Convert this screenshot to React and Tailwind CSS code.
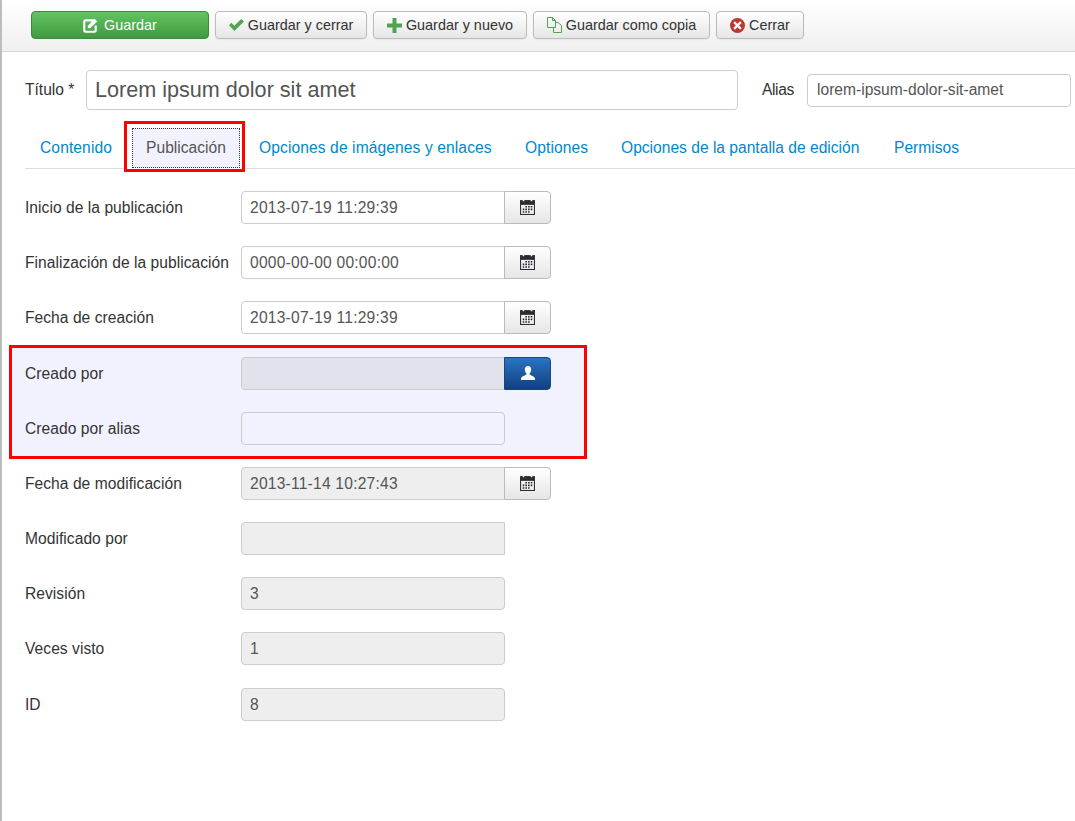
const btn =
  'h-[28px] flex items-center justify-center gap-[4px] rounded-[4px] border border-[#bbb] bg-gradient-to-b from-white to-[#e6e6e6] text-[14.4px] text-[#333] shadow-[0_1px_2px_rgba(0,0,0,0.05)]';

function EditIcon() {
  return (
    <svg width="15" height="15" viewBox="0 0 14 14" fill="none">
      <path d="M10 2.200H2.200a1 1 0 0 0-1 1v8.600a1 1 0 0 0 1 1h8.600a1 1 0 0 0 1-1V7" stroke="#fff" strokeWidth="2" />
      <path d="M4.500 9.500V7.300L10.800.8l2.400 2.400-6.500 6.300z" fill="#fff" />
    </svg>
  );
}

function CheckIcon() {
  return (
    <svg width="15" height="12" viewBox="0 0 15 12">
      <path d="M0 6.200 2.300 3.800l3.100 3L12.200 0 15 2.500 5.400 12z" fill="#51a351" />
    </svg>
  );
}

function PlusIcon() {
  return (
    <svg width="15" height="15" viewBox="0 0 15 15">
      <path d="M5.500 0h4v5.500H15v4H9.500V15h-4V9.500H0v-4h5.500z" fill="#51a351" />
    </svg>
  );
}

function CopyIcon() {
  return (
    <svg width="15" height="16" viewBox="0 0 15 16" fill="none" stroke="#51a351">
      <path d="M.5.5h5l3 3v7h-8z" />
      <path d="M5.500.5v3h3" />
      <path d="M8.500 5.500h2.500l3.500 3v7h-8v-5" />
    </svg>
  );
}

function CloseIcon() {
  return (
    <svg width="15" height="15" viewBox="0 0 15 15">
      <circle cx="7.500" cy="7.500" r="7.500" fill="#bd362f" />
      <path d="M5 5l5 5M10 5l-5 5" stroke="#fff" strokeWidth="2.400" strokeLinecap="square" />
    </svg>
  );
}

function CalendarIcon() {
  return (
    <svg width="15" height="16" viewBox="0 0 14 15" className="mb-[2px]">
      <path d="M0 1h14v14H0z" fill="#2b2b33" />
      <path d="M1 5.500h12V14H1z" fill="#f2f2f2" />
      <path
        d="M5 6.500h1.500V8H5zM7.500 6.500H9V8H7.500zM10 6.500h1.500V8H10zM2.500 9H4v1.500H2.500zM5 9h1.500v1.500H5zM7.500 9H9v1.500H7.500zM10 9h1.500v1.500H10zM2.500 11.500H4V13H2.500zM5 11.500h1.500V13H5zM7.500 11.500H9V13H7.500z"
        fill="#2b2b33"
      />
      <path d="M2.500 0h1.500v2H2.500zM10 0h1.500v2H10z" fill="#f2f2f2" />
    </svg>
  );
}

function UserIcon() {
  return (
    <svg width="14" height="14" viewBox="0 0 14 14" className="mb-[2px]">
      <path
        d="M7 0c2 0 3.200 1.500 3.200 3.600 0 1.600-.7 3-1.500 3.700v1.300c0 .8 5.300 1.500 5.300 4.400v1H0v-1c0-2.900 5.300-3.600 5.300-4.400V7.300C4.500 6.600 3.800 5.200 3.800 3.600 3.800 1.500 5 0 7 0z"
        fill="#fff"
      />
    </svg>
  );
}

function Row({ label, value, readOnly, tinted, button, square, last }) {
  const bg = tinted ? 'bg-[#e2e2ec]' : readOnly ? 'bg-[#eeeeee]' : tinted === false ? 'bg-[#f2f2ff]' : 'bg-white';
  return (
    <div className={`flex items-center h-[33px] ${last ? 'mb-[11px]' : 'mb-[22px]'}`}>
      <div className="w-[216px] text-[15.6px] tracking-[0.04px] text-[#333]">{label}</div>
      <div
        className={`w-[264px] h-[33px] border border-[#ccc] flex items-center px-[8px] text-[15.6px] tracking-[0.22px] text-[#555] ${bg} ${
          button || square ? 'rounded-l-[4px]' : 'rounded-[4px]'
        }`}
      >
        {value}
      </div>
      {button === 'calendar' && (
        <div className="w-[47px] h-[33px] -ml-px flex items-center justify-center rounded-r-[4px] border border-[#bbb] bg-gradient-to-b from-white to-[#e6e6e6]">
          <CalendarIcon />
        </div>
      )}
      {button === 'user' && (
        <div className="w-[47px] h-[33px] -ml-px flex items-center justify-center rounded-r-[4px] border border-[#17457e] bg-gradient-to-b from-[#2a74c4] to-[#124080]">
          <UserIcon />
        </div>
      )}
    </div>
  );
}

export default function App() {
  return (
    <div className="h-[821px] overflow-hidden bg-white border-l-2 border-[#bdbdbd] font-['Liberation_Sans',Arial,sans-serif]">
      <div className="h-[52px] pl-[29px] pt-[11px] flex items-start gap-[6px] border-b border-[#d5d5d5] bg-gradient-to-b from-white to-[#f0f0f0]">
        <button className="w-[178px] h-[28px] flex items-center justify-center gap-[6px] rounded-[4px] border border-[#3c8a3c] bg-gradient-to-b from-[#62c462] to-[#409a40] text-[14.4px] text-white">
          <EditIcon />
          <span className="mt-[2px]">Guardar</span>
        </button>
        <button className={`${btn} w-[152px]`}>
          <CheckIcon />
          <span className="mt-[2px]">Guardar y cerrar</span>
        </button>
        <button className={`${btn} w-[154px]`}>
          <PlusIcon />
          <span className="mt-[2px]">Guardar y nuevo</span>
        </button>
        <button className={`${btn} w-[177px]`}>
          <CopyIcon />
          <span className="mt-[2px]">Guardar como copia</span>
        </button>
        <button className={`${btn} w-[88px]`}>
          <CloseIcon />
          <span className="mt-[2px]">Cerrar</span>
        </button>
      </div>

      <div className="pl-[23px]">
        <div className="flex items-center mt-[18px] h-[40px]">
          <div className="w-[61px] text-[15.6px] text-[#333]">Título *</div>
          <div className="w-[652px] h-[40px] rounded-[4px] border border-[#ccc] flex items-center px-[8px] text-[21.6px] text-[#555]">
            Lorem ipsum dolor sit amet
          </div>
          <div className="ml-[24px] w-[45px] text-[15.6px] tracking-[-0.4px] text-[#333]">Alias</div>
          <div className="w-[264px] h-[33px] rounded-[4px] border border-[#ccc] flex items-center px-[9px] text-[15.6px] text-[#555]">
            lorem-ipsum-dolor-sit-amet
          </div>
        </div>

        <div className="mt-[15px] h-[44px] flex border-b border-[#ddd] text-[15.6px] tracking-[0.1px] text-[#0088cc]">
          <div className="pl-[15px] w-[99px] pt-[11px]">Contenido</div>
          <div className="relative w-[121px] h-[51px] -mt-[4px] border-[3px] border-[#ff0000] bg-white pl-[5px] pr-[2px] pt-[4px] shrink-0">
            <div className="h-[40px] border border-dotted border-[#333] bg-[#f2f2ff] text-[#555] tracking-normal flex items-center justify-center">
              Publicación
            </div>
          </div>
          <div className="pl-[14px] pt-[11px] w-[280px]">Opciones de imágenes y enlaces</div>
          <div className="pt-[11px] w-[96px]">Optiones</div>
          <div className="pt-[11px] w-[273px] tracking-normal">Opciones de la pantalla de edición</div>
          <div className="pt-[11px] tracking-normal">Permisos</div>
        </div>

        <div className="mt-[22px]">
          <Row label="Inicio de la publicación" value="2013-07-19 11:29:39" button="calendar" />
          <Row label="Finalización de la publicación" value="0000-00-00 00:00:00" button="calendar" />
          <Row label="Fecha de creación" value="2013-07-19 11:29:39" button="calendar" />
          <div className="-mt-[11px] -ml-[16px] mb-[8px] w-[578px] pl-[13px] pt-[9px] border-[3px] border-[#ff0000] bg-[#f2f2ff]">
            <Row label="Creado por" tinted button="user" />
            <Row label="Creado por alias" tinted={false} last />
          </div>
          <Row label="Fecha de modificación" value="2013-11-14 10:27:43" readOnly button="calendar" />
          <Row label="Modificado por" readOnly square />
          <Row label="Revisión" value="3" readOnly />
          <Row label="Veces visto" value="1" readOnly />
          <div className="mt-[23px]">
            <Row label="ID" value="8" readOnly />
          </div>
        </div>
      </div>
    </div>
  );
}
